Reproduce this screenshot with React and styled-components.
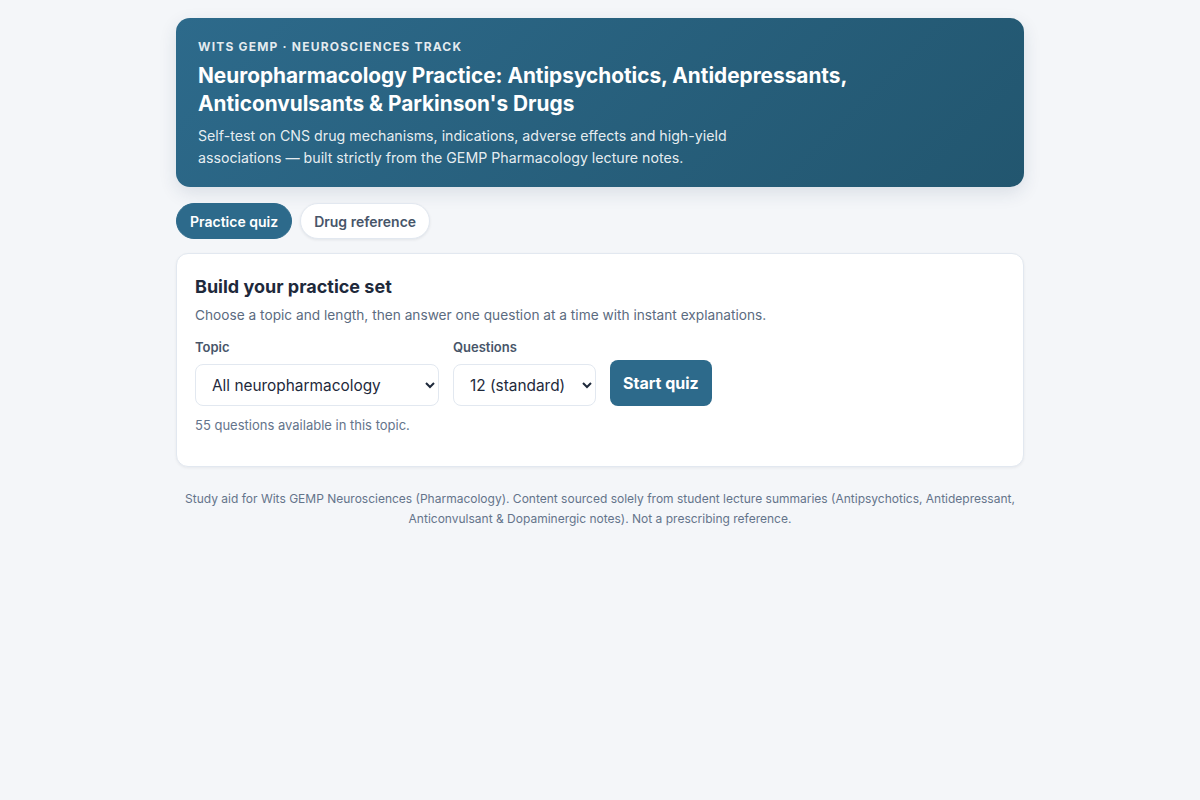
import React from 'react'
import styled, { createGlobalStyle } from 'styled-components'

const GlobalStyle = createGlobalStyle`
    body {
        margin: 0;
        background: #f4f6f9;
        font-family: Inter, "Noto Sans", sans-serif;
        color: #1e293b;
    }
`;

const App = () => {
    return (
        <>
            <GlobalStyle />
            <Page>
                <Hero>
                    <Eyebrow>Wits GEMP · Neurosciences Track</Eyebrow>
                    <Title>Neuropharmacology Practice: Antipsychotics, Antidepressants, Anticonvulsants &amp; Parkinson's Drugs</Title>
                    <Lead>Self-test on CNS drug mechanisms, indications, adverse effects and high-yield associations — built strictly from the GEMP Pharmacology lecture notes.</Lead>
                </Hero>

                <Tabs>
                    <Tab active>Practice quiz</Tab>
                    <Tab>Drug reference</Tab>
                </Tabs>

                <Card>
                    <CardTitle>Build your practice set</CardTitle>
                    <CardText>Choose a topic and length, then answer one question at a time with instant explanations.</CardText>
                    <Controls>
                        <Field>
                            <Label>Topic</Label>
                            <Select width="244px" defaultValue="all">
                                <option value="all">All neuropharmacology</option>
                                <option value="ap">Antipsychotics</option>
                                <option value="ad">Antidepressants</option>
                                <option value="ac">Anticonvulsants</option>
                                <option value="pd">Parkinson's drugs</option>
                            </Select>
                        </Field>
                        <Field>
                            <Label>Questions</Label>
                            <Select width="143px" defaultValue="12">
                                <option value="6">6 (quick)</option>
                                <option value="12">12 (standard)</option>
                                <option value="20">20 (long)</option>
                            </Select>
                        </Field>
                        <StartButton>Start quiz</StartButton>
                    </Controls>
                    <Hint>55 questions available in this topic.</Hint>
                </Card>

                <Footer>Study aid for Wits GEMP Neurosciences (Pharmacology). Content sourced solely from student lecture summaries (Antipsychotics, Antidepressant, Anticonvulsant &amp; Dopaminergic notes). Not a prescribing reference.</Footer>
            </Page>
        </>
    )
}

export default App

const Page = styled.div`
    width: 848px;
    margin: 18px auto 0;
`;

const Hero = styled.header`
    background: linear-gradient(135deg, #2d6a8b 0%, #22566f 100%);
    border-radius: 14px;
    padding: 21px 22px 18px;
    color: #fff;
    box-shadow: 0 6px 18px rgba(30, 60, 90, 0.12);
`;

const Eyebrow = styled.div`
    font-size: 12px;
    font-weight: 700;
    letter-spacing: 1.2px;
    text-transform: uppercase;
    color: rgba(255, 255, 255, 0.88);
    line-height: 16px;
`;

const Title = styled.h1`
    margin: 7px 0 0;
    font-size: 20.8px;
    font-weight: 700;
    line-height: 28px;
    max-width: 700px;
`;

const Lead = styled.p`
    margin: 7px 0 0;
    font-size: 14.2px;
    line-height: 22px;
    max-width: 560px;
    color: rgba(255, 255, 255, 0.9);
`;

const Tabs = styled.nav`
    display: flex;
    gap: 8px;
    margin-top: 16px;
`;

const Tab = styled.button`
    height: 36px;
    padding: 0 13px;
    border-radius: 18px;
    font-family: inherit;
    font-size: 14px;
    font-weight: 600;
    cursor: pointer;
    border: 1px solid ${p => p.active ? '#2d6a8b' : '#e2e8f0'};
    background: ${p => p.active ? '#2d6a8b' : '#fff'};
    color: ${p => p.active ? '#fff' : '#475569'};
    box-shadow: ${p => p.active ? 'none' : '0 1px 3px rgba(15, 23, 42, 0.08)'};
`;

const Card = styled.section`
    margin-top: 14px;
    background: #fff;
    border: 1px solid #e2e8f0;
    border-radius: 12px;
    padding: 21px 18px 32px;
    box-shadow: 0 1px 3px rgba(15, 23, 42, 0.06);
`;

const CardTitle = styled.h2`
    margin: 0;
    font-size: 18px;
    font-weight: 700;
    line-height: 24px;
    color: #1e293b;
`;

const CardText = styled.p`
    margin: 6px 0 0;
    font-size: 13.7px;
    line-height: 20px;
    color: #5b6b80;
`;

const Controls = styled.div`
    display: flex;
    align-items: flex-end;
    gap: 14px;
    margin-top: 13px;
`;

const Field = styled.label`
    display: flex;
    flex-direction: column;
    gap: 8px;
`;

const Label = styled.span`
    font-size: 13px;
    font-weight: 600;
    line-height: 18px;
    color: #475569;
`;

const Select = styled.select`
    width: ${p => p.width};
    height: 42px;
    padding: 0 10px 0 12px;
    border: 1px solid #e2e8f0;
    border-radius: 8px;
    background: #fff;
    font-family: inherit;
    font-size: 15.4px;
    color: #1e293b;
`;

const StartButton = styled.button`
    height: 46px;
    padding: 0 13px;
    border: none;
    border-radius: 8px;
    background: #2d6a8b;
    color: #fff;
    font-family: inherit;
    font-size: 16px;
    font-weight: 700;
    cursor: pointer;
`;

const Hint = styled.p`
    margin: 10px 0 0;
    font-size: 13px;
    line-height: 18px;
    color: #64748b;
`;

const Footer = styled.footer`
    margin-top: 22px;
    text-align: center;
    font-size: 12px;
    line-height: 20px;
    color: #64748b;
    padding: 0 8px;
`;
